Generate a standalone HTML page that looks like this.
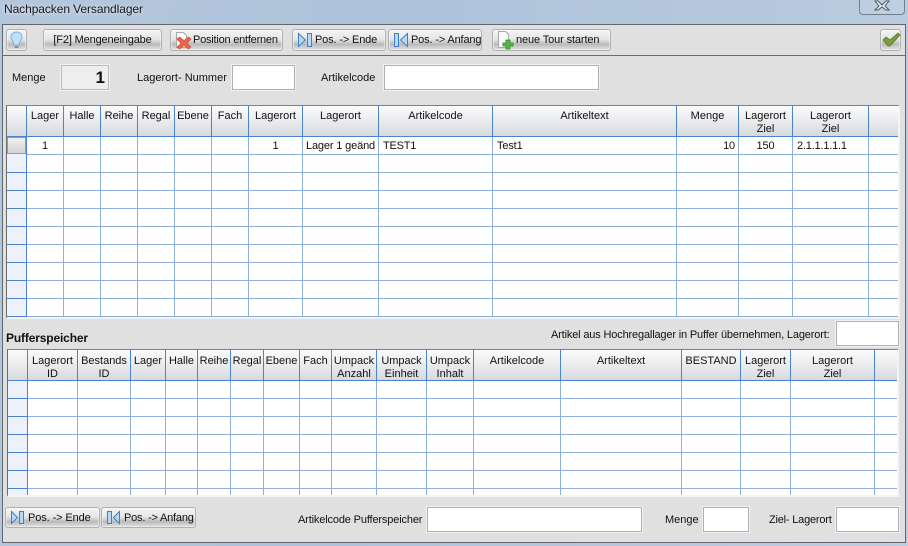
<!DOCTYPE html>
<html><head><meta charset="utf-8">
<style>
html,body{margin:0;padding:0}
body{width:908px;height:546px;position:relative;overflow:hidden;background:linear-gradient(100deg,#b4c6dc 0%,#aec3da 40%,#b4c7dd 70%,#bccde0 100%);font-family:"Liberation Sans",sans-serif;font-size:11px;color:#111}
div{position:absolute;box-sizing:border-box}
.t{white-space:nowrap;line-height:13px}
.b{height:22px;top:29px;border:1px solid #aeb0b2;border-radius:3px;background:linear-gradient(#f4f4f4 0%,#e6e6e6 45%,#d8d8d8 55%,#b9b9b9 72%,#cfcfcf 85%,#dedede 100%);box-shadow:inset 0 0 0 1px rgba(255,255,255,.45);line-height:21px;white-space:nowrap;text-align:center;letter-spacing:-.15px}
.i{background:#fff;border:1px solid #a9b0b8;outline:1px solid #f2f2f2}
.h{top:0;line-height:13px;text-align:center;white-space:nowrap;padding-top:3px;overflow:hidden}
svg{position:absolute;left:0;top:0}
.c{white-space:nowrap;line-height:13px;letter-spacing:-.15px}
</style></head><body>
<div class="t" style="left:4px;top:3px;font-size:12px;color:#1a1a1a;letter-spacing:-.08px;text-shadow:0 0 5px #eef3f8">Nachpacken Versandlager</div>

<!-- close -->
<div style="left:859px;top:-3px;width:46px;height:18px;border:1px solid #6f8093;border-radius:0 0 4px 4px;background:rgba(200,214,230,.35)"></div>
<svg width="908" height="20"><path d="M878 1L882 5 886 1 889 1 885 6 889 10 886 10 882 7 878 10 875 10 879 6 875 1Z" fill="#eef1f4" stroke="#4d5560" stroke-width="1"/></svg>

<!-- client -->
<div style="left:2px;top:24px;width:904px;height:519px;background:#e0e0e0;border:1px solid #5f6870"></div>
<div style="left:3px;top:55px;width:902px;height:1px;background:#666d74"></div>

<!-- toolbar -->
<div class="b" style="left:6px;width:21px"></div>
<svg width="30" height="60"><path d="M16.500 32c-3.400 0-5.500 2.400-5.500 5.200 0 2.200 1.600 3.300 2.500 5.300v2.500h6v-2.500c.9-2 2.500-3.100 2.500-5.300 0-2.800-2.100-5.200-5.500-5.200z" fill="#bfe2fa" stroke="#7fb0d6"/><path d="M14.500 46h4v2h-4z" fill="#8a8f94"/></svg>
<div class="b" style="left:43px;width:119px">[F2] Mengeneingabe</div>
<div class="b" style="left:170px;width:113px;text-align:left;padding-left:22px;letter-spacing:-.22px">Position entfernen</div>
<svg width="200" height="60" style="left:170px"><path d="M6.500 32.500h7l3 3v12h-10z" fill="#fafafa" stroke="#a8a8a8"/><path d="M7 39l2.500-2 4.500 3.500L18.500 37l2.500 2-4 4.500 4 3.500-2.500 2-4.500-3.500L9.500 49 7 47l4-3.500z" fill="#e9664c" stroke="#c9442c" stroke-width=".6"/></svg>
<div class="b" style="left:292px;width:94px;text-align:left;padding-left:22px">Pos. -&gt; Ende</div>
<svg width="30" height="60" style="left:292px"><path d="M6.500 33.500l7 6.500-7 6.500z" fill="#b8d8f4" stroke="#3c80c8"/><rect x="15.500" y="33.500" width="4" height="13" fill="#b8d8f4" stroke="#3c80c8"/></svg>
<div class="b" style="left:388px;width:94px;text-align:left;padding-left:22px">Pos. -&gt; Anfang</div>
<svg width="30" height="60" style="left:388px"><rect x="6.500" y="33.500" width="4" height="13" fill="#b8d8f4" stroke="#3c80c8"/><path d="M19.500 33.500l-7 6.500 7 6.500z" fill="#b8d8f4" stroke="#3c80c8"/></svg>
<div class="b" style="left:492px;width:119px;text-align:left;padding-left:23px;letter-spacing:-.12px">neue Tour starten</div>
<svg width="30" height="60" style="left:492px"><path d="M6.500 31.500h7l3 3v13h-10z" fill="#fafafa" stroke="#a8a8a8"/><path d="M14 40h4v3h3v3h-3v3h-4v-3h-3v-3h3z" fill="#54b848" stroke="#2f8a2a" stroke-width=".8"/></svg>
<div class="b" style="left:880px;width:21px"></div>
<svg width="30" height="60" style="left:878px"><path d="M5 40l3-3 4 3 8-7 2 2-10 11h-2z" fill="#7c9c3c" stroke="#5a7a28" stroke-width=".8"/></svg>

<!-- top inputs -->
<div class="t" style="left:12px;top:72px">Menge</div>
<div class="i" style="left:61px;top:65px;width:48px;height:25px;background:#eeeeee;border-color:#b4bcc6"></div>
<div class="t" style="left:61px;top:68px;width:44px;text-align:right;font-size:17px;line-height:19px;font-weight:bold">1</div>
<div class="t" style="left:137px;top:72px">Lagerort- Nummer</div>
<div class="i" style="left:232px;top:65px;width:63px;height:25px"></div>
<div class="t" style="left:321px;top:72px">Artikelcode</div>
<div class="i" style="left:384px;top:65px;width:215px;height:25px"></div>

<!-- Grid 1 -->
<div style="left:6px;top:105px;width:894px;height:214px;background:#fff;border-top:1px solid #808080;border-left:1px solid #6c6c6c;border-right:2px solid #f4f4f4;border-bottom:2px solid #f4f4f4"></div>
<div style="left:7px;top:106px;width:891px;height:30px;background:linear-gradient(#fbfbfb,#ecedef 45%,#d6d9dd)"></div>
<div style="left:7px;top:136px;width:19px;height:180px;background:#edf2fa"></div>
<div style="left:7px;top:137px;width:19px;height:17px;background:linear-gradient(#f0f0f0,#d4d4d4);border:1px solid #9a9a9a"></div>
<svg width="908" height="546">
<path d="M26 154.500H898M26 172.500H898M26 190.500H898M26 208.500H898M26 226.500H898M26 244.500H898M26 262.500H898M26 280.500H898M26 298.500H898M26 316.500H898" stroke="#8fb0de" fill="none"/>
<path d="M63.500 137V317M100.500 137V317M137.500 137V317M174.500 137V317M211.500 137V317M248.500 137V317M302.500 137V317M378.500 137V317M492.500 137V317M676.500 137V317M738.500 137V317M792.500 137V317M868.500 137V317" stroke="#8fb0de" fill="none"/>
<path d="M7 136.500H898M7 172.500H26M7 190.500H26M7 208.500H26M7 226.500H26M7 244.500H26M7 262.500H26M7 280.500H26M7 298.500H26M7 316.500H26M26.500 106V317M63.500 106V136M100.500 106V136M137.500 106V136M174.500 106V136M211.500 106V136M248.500 106V136M302.500 106V136M378.500 106V136M492.500 106V136M676.500 106V136M738.500 106V136M792.500 106V136M868.500 106V136" stroke="#4a84cf" fill="none"/>
</svg>
<div style="left:0;top:107px;width:908px;height:29px">
<div class="h" style="left:27px;width:36px">Lager</div>
<div class="h" style="left:64px;width:36px">Halle</div>
<div class="h" style="left:101px;width:36px">Reihe</div>
<div class="h" style="left:138px;width:36px">Regal</div>
<div class="h" style="left:175px;width:36px">Ebene</div>
<div class="h" style="left:212px;width:36px">Fach</div>
<div class="h" style="left:249px;width:53px">Lagerort</div>
<div class="h" style="left:303px;width:75px">Lagerort</div>
<div class="h" style="left:379px;width:113px">Artikelcode</div>
<div class="h" style="left:493px;width:183px">Artikeltext</div>
<div class="h" style="left:677px;width:61px">Menge</div>
<div class="h" style="left:739px;width:53px">Lagerort<br>Ziel</div>
<div class="h" style="left:793px;width:75px">Lagerort<br>Ziel</div>
</div>
<div class="c" style="left:27px;top:140px;width:36px;text-align:center">1</div>
<div class="c" style="left:249px;top:140px;width:53px;text-align:center">1</div>
<div class="c" style="left:306px;top:140px">Lager 1 geänd</div>
<div class="c" style="left:383px;top:140px;letter-spacing:-.2px">TEST1</div>
<div class="c" style="left:497px;top:140px">Test1</div>
<div class="c" style="left:677px;top:140px;width:58px;text-align:right">10</div>
<div class="c" style="left:739px;top:140px;width:53px;text-align:center">150</div>
<div class="c" style="left:797px;top:140px;letter-spacing:-.2px">2.1.1.1.1.1</div>

<!-- Pufferspeicher -->
<div class="t" style="left:6px;top:332px;font-weight:bold;font-size:12px;letter-spacing:-.15px">Pufferspeicher</div>
<div class="t" style="left:551px;top:329px;letter-spacing:-.16px">Artikel aus Hochregallager in Puffer übernehmen, Lagerort:</div>
<div class="i" style="left:836px;top:321px;width:63px;height:25px"></div>

<!-- Grid 2 -->
<div style="left:7px;top:349px;width:892px;height:148px;background:#fff;border-top:1px solid #808080;border-left:1px solid #6c6c6c;border-right:2px solid #f4f4f4;border-bottom:2px solid #f4f4f4"></div>
<div style="left:8px;top:350px;width:889px;height:30px;background:linear-gradient(#fbfbfb,#ecedef 45%,#d6d9dd)"></div>
<div style="left:8px;top:380px;width:19px;height:115px;background:#edf2fa"></div>
<svg width="908" height="546">
<path d="M27 398.500H897M27 416.500H897M27 434.500H897M27 452.500H897M27 470.500H897M27 488.500H897" stroke="#8fb0de" fill="none"/>
<path d="M77.500 381V495M130.500 381V495M165.500 381V495M197.500 381V495M230.500 381V495M263.500 381V495M299.500 381V495M331.500 381V495M376.500 381V495M426.500 381V495M473.500 381V495M560.500 381V495M681.500 381V495M740.500 381V495M790.500 381V495M874.500 381V495" stroke="#8fb0de" fill="none"/>
<path d="M8 380.500H897M8 398.500H27M8 416.500H27M8 434.500H27M8 452.500H27M8 470.500H27M8 488.500H27M27.500 350V495M77.500 350V380M130.500 350V380M165.500 350V380M197.500 350V380M230.500 350V380M263.500 350V380M299.500 350V380M331.500 350V380M376.500 350V380M426.500 350V380M473.500 350V380M560.500 350V380M681.500 350V380M740.500 350V380M790.500 350V380M874.500 350V380" stroke="#4a84cf" fill="none"/>
</svg>
<div style="left:0;top:352px;width:908px;height:28px">
<div class="h" style="left:28px;width:49px">Lagerort<br>ID</div>
<div class="h" style="left:78px;width:52px">Bestands<br>ID</div>
<div class="h" style="left:131px;width:34px">Lager</div>
<div class="h" style="left:166px;width:31px">Halle</div>
<div class="h" style="left:198px;width:32px">Reihe</div>
<div class="h" style="left:231px;width:32px">Regal</div>
<div class="h" style="left:264px;width:35px">Ebene</div>
<div class="h" style="left:300px;width:31px">Fach</div>
<div class="h" style="left:332px;width:44px">Umpack<br>Anzahl</div>
<div class="h" style="left:377px;width:49px">Umpack<br>Einheit</div>
<div class="h" style="left:427px;width:46px">Umpack<br>Inhalt</div>
<div class="h" style="left:474px;width:86px">Artikelcode</div>
<div class="h" style="left:561px;width:120px">Artikeltext</div>
<div class="h" style="left:682px;width:58px">BESTAND</div>
<div class="h" style="left:741px;width:49px">Lagerort<br>Ziel</div>
<div class="h" style="left:791px;width:83px">Lagerort<br>Ziel</div>
</div>

<!-- bottom -->
<div class="b" style="left:5px;top:507px;width:95px;height:21px;line-height:20px;text-align:left;padding-left:22px;letter-spacing:-.1px">Pos. -&gt; Ende</div>
<svg width="30" height="546" style="left:5px"><path d="M6.500 511.500l6 6-6 6z" fill="#b8d8f4" stroke="#3c80c8"/><rect x="14.500" y="511.500" width="4" height="12" fill="#b8d8f4" stroke="#3c80c8"/></svg>
<div class="b" style="left:101px;top:507px;width:95px;height:21px;line-height:20px;text-align:left;padding-left:22px;letter-spacing:-.2px">Pos. -&gt; Anfang</div>
<svg width="30" height="546" style="left:101px"><rect x="6.500" y="511.500" width="4" height="12" fill="#b8d8f4" stroke="#3c80c8"/><path d="M18.500 511.500l-6 6 6 6z" fill="#b8d8f4" stroke="#3c80c8"/></svg>
<div class="t" style="left:298px;top:514px;letter-spacing:-.15px">Artikelcode Pufferspeicher</div>
<div class="i" style="left:427px;top:507px;width:215px;height:25px"></div>
<div class="t" style="left:665px;top:514px">Menge</div>
<div class="i" style="left:703px;top:507px;width:46px;height:25px"></div>
<div class="t" style="left:769px;top:514px;letter-spacing:-.2px">Ziel- Lagerort</div>
<div class="i" style="left:836px;top:507px;width:63px;height:25px"></div>
</body></html>
